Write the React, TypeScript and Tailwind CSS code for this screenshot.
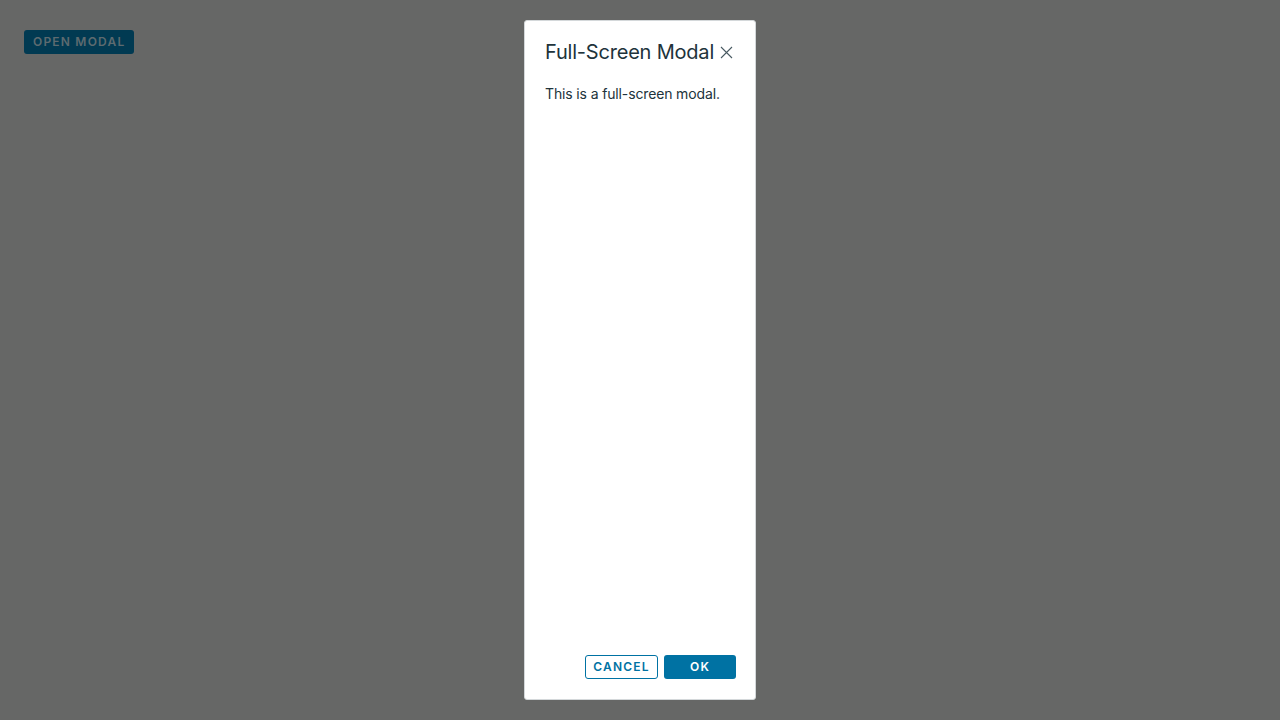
export default function App() {
  return (
    <div
      className="relative w-full h-[720px] bg-[#666766] overflow-hidden"
      style={{ fontFamily: 'Inter, "Noto Sans", sans-serif' }}
    >
      <div className="pt-[30px] pl-6">
        <button className="block h-6 px-[9px] rounded-[3px] bg-[#013a52] text-[#5d6b70] text-[12px] font-semibold tracking-[0.1em] uppercase leading-6">
          Open Modal
        </button>
      </div>

      {/* modal */}
      <div className="absolute left-[524px] top-5 w-[232px] h-[680px] bg-white border border-[#d4d8da] rounded-[3px] flex flex-col pl-5 pr-[19px] pt-[19px] pb-5">
        <div className="flex items-center justify-between">
          <h1 className="text-[20px] leading-6 text-[#21333b] tracking-[-0.01em]">Full-Screen Modal</h1>
          <button className="text-[#495a62] mr-[3px]">
            <svg width="13" height="13" viewBox="0 0 13 13" fill="none" stroke="currentColor" strokeWidth="1.1">
              <path d="M1 1L12 12M12 1L1 12" />
            </svg>
          </button>
        </div>
        <p className="mt-5 text-[14px] leading-5 text-[#21333b] tracking-[-0.01em]">This is a full-screen modal.</p>
        <div className="flex-1" />
        <div className="flex justify-end gap-[6px]">
          <button className="h-6 w-[73px] rounded-[3px] border border-[#0072a3] text-[#0072a3] text-[12px] font-semibold tracking-[0.1em] uppercase">
            Cancel
          </button>
          <button className="h-6 w-[72px] rounded-[3px] bg-[#0072a3] text-white text-[12px] font-semibold tracking-[0.1em] uppercase">
            Ok
          </button>
        </div>
      </div>
    </div>
  );
}
